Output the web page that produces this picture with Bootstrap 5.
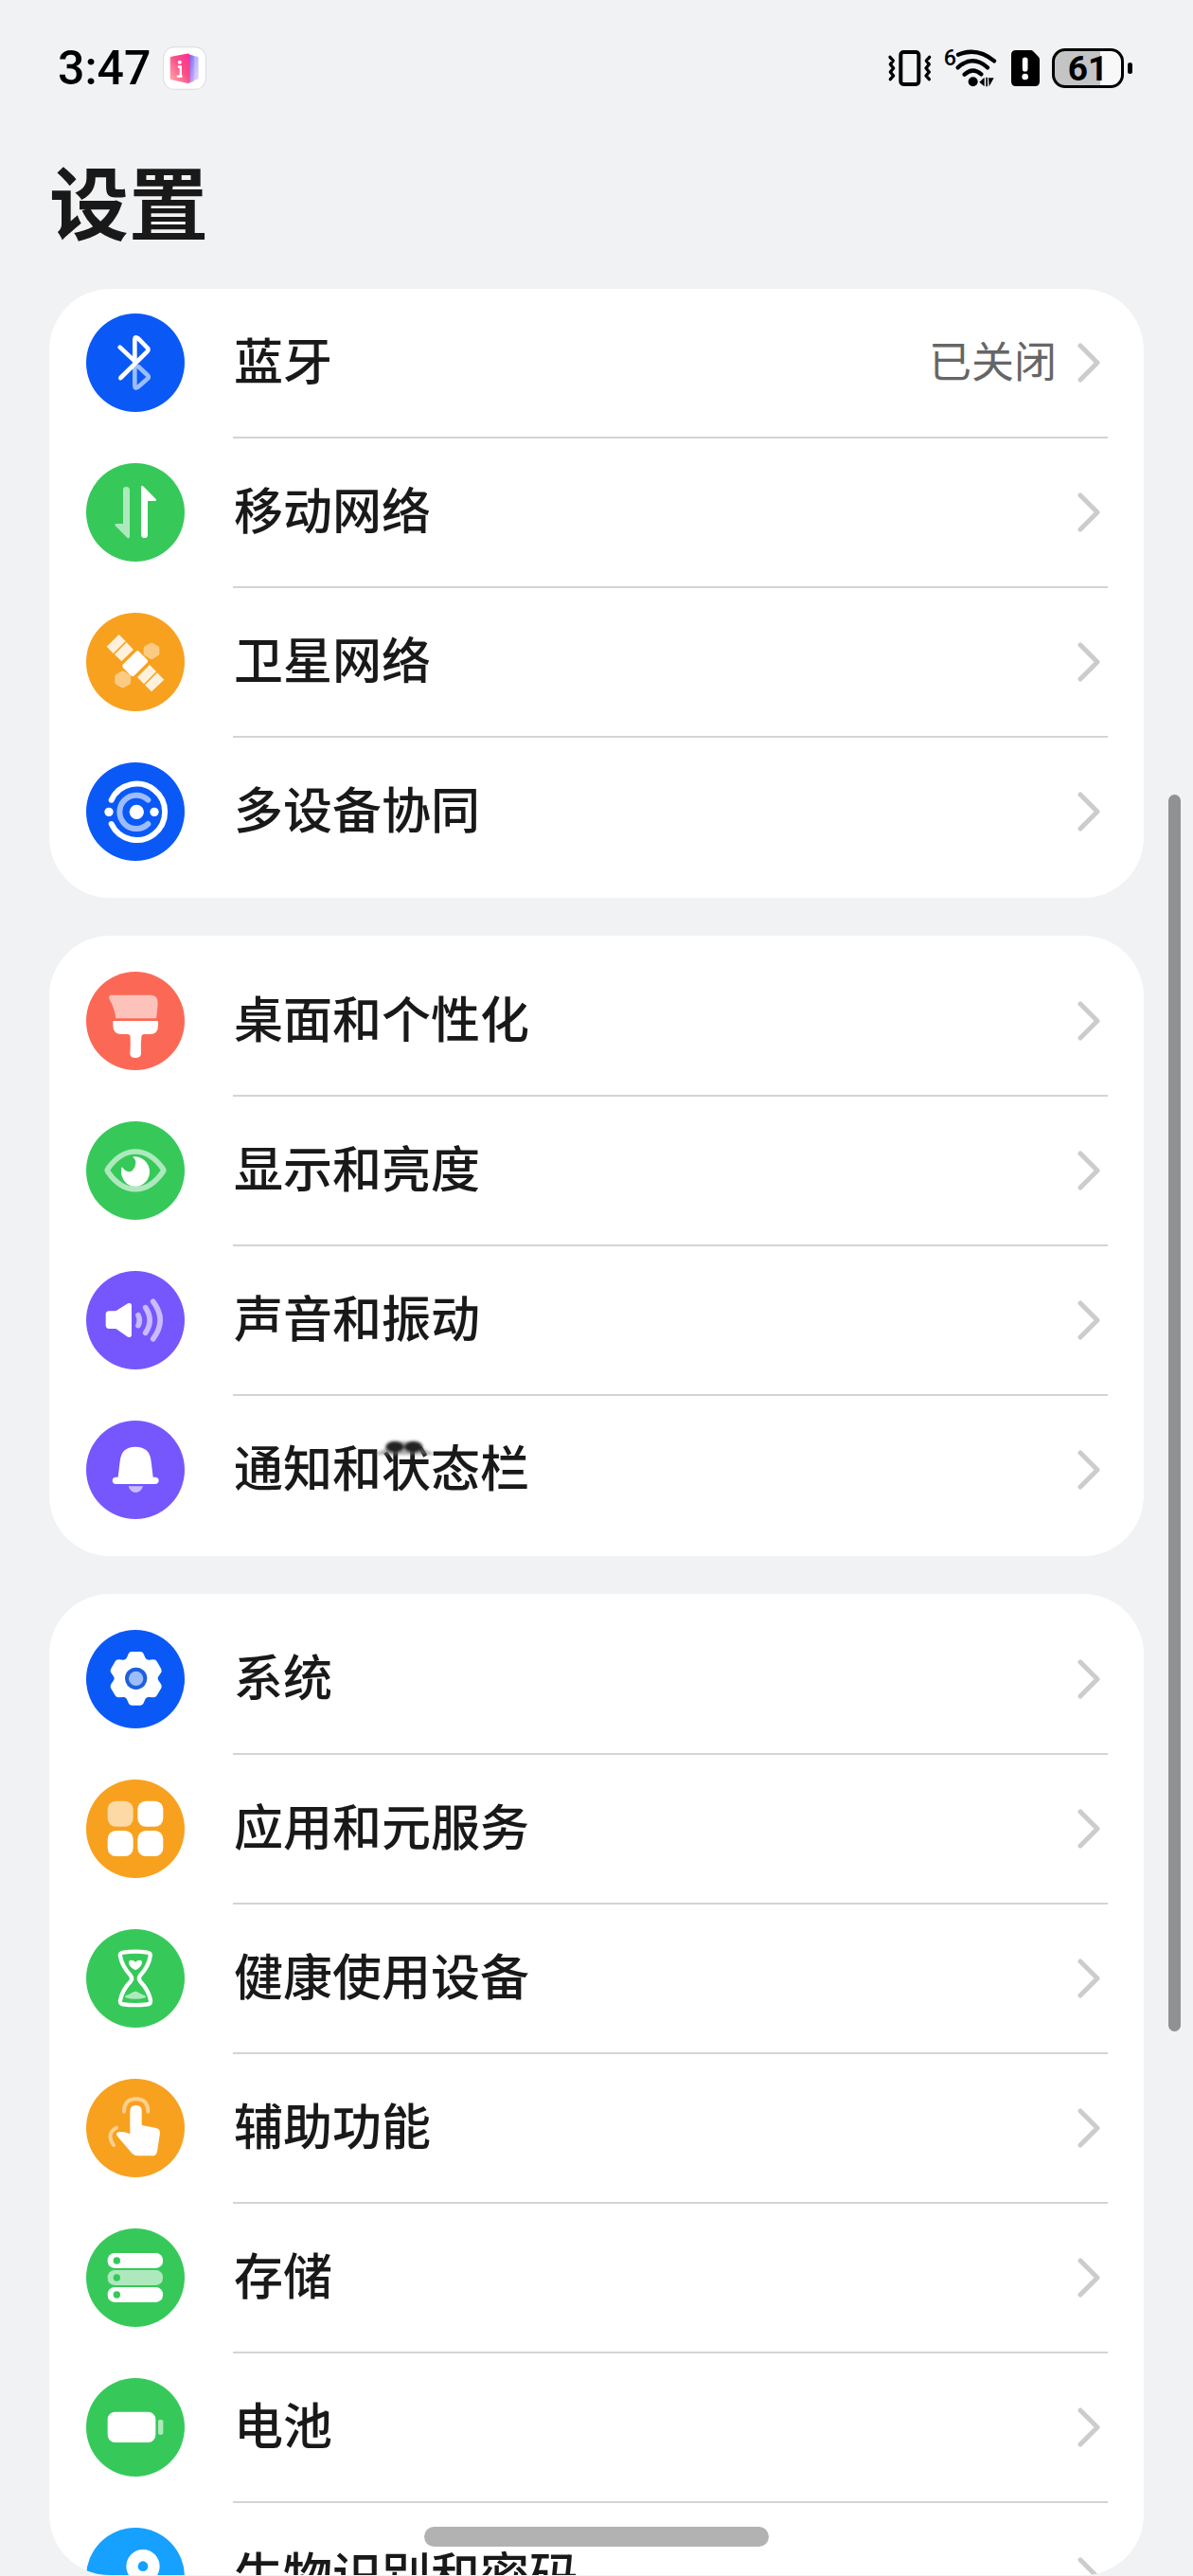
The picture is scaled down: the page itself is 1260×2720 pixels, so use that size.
<!DOCTYPE html>
<html lang="zh-CN">
<head>
<meta charset="utf-8">
<meta name="viewport" content="width=device-width, initial-scale=1">
<title>设置</title>
<link href="https://cdn.jsdelivr.net/npm/bootstrap@5.3.0/dist/css/bootstrap.min.css" rel="stylesheet">
<style>
  :root {
    --page: #f1f2f4;
    --ink: #191919;
    --blue: #0a59f7;
    --green: #36c95a;
    --orange: #f8a11f;
    --red: #fb6956;
    --purple: #7657fd;
    --sky: #16a0ff;
  }
  body {
    background: var(--page);
    color: var(--ink);
    font-family: "Noto Sans CJK SC", "Noto Sans", sans-serif;
  }
  .status-bar { height: 144px; padding: 0 64px 0 61px; color: #000; font-family: Roboto, sans-serif; }
  .clock { font-size: 50px; line-height: 60px; font-weight: 500; }
  .app-badge { margin-left: 13px; }
  .status-icons { gap: 10px; }
  .status-icons svg { overflow: visible; }
  .page-title { font-size: 84px; line-height: 134px; font-weight: 700; padding: 0 52px; margin-bottom: 27px; }
  .battery-shell {
    width: 76px; height: 42px; border: 3px solid #000; border-radius: 14px;
    background: linear-gradient(to right, #c3c4c5 68%, #f8f8f9 68%);
    font-size: 37px; line-height: 37px; font-weight: 700;
  }
  .battery-nub { width: 5px; height: 12px; border-radius: 3px; background: #000; }
  .settings-scroll {
    margin: 0 52px 1px; border-radius: 64px; gap: 40px;
    overflow-y: auto; scrollbar-width: none; min-height: 0;
  }
  .settings-scroll::-webkit-scrollbar { display: none; }
  .settings-group { background: #fff; border-radius: 64px; padding: 12px 38px 11px 39px; flex: none; }
  .settings-group:first-child { padding-top: 0; }
  .settings-item { height: 158px; gap: 51px; color: inherit; }
  .settings-item > svg { width: 104px; height: 104px; flex: none; border-radius: 50%; margin-bottom: 2px; }
  .item-body { height: 158px; border-bottom: 2px solid #d4d4d4; padding: 0 8px 0 1px; }
  .settings-item:last-child .item-body { border-color: transparent; }
  .item-label { font-size: 52px; line-height: 76px; font-weight: 500; margin-bottom: 8px; }
  .item-value { font-size: 45px; line-height: 66px; color: #666; margin-right: 22px; margin-bottom: 6px; }
  .chevron { width: 24px; height: 42px; flex: none; fill: none; stroke: #ccc; stroke-width: 5; stroke-linecap: round; stroke-linejoin: round; }
  .smudge { left: 147px; top: 6px; width: 64px; height: 32px; }
  .scroll-thumb { right: 13px; top: 839px; width: 13px; height: 48%; border-radius: 7px; background: #909193; }
  .home-pill { bottom: 31px; width: 364px; height: 21px; border-radius: 11px; background: #b2b2b2; }
</style>
</head>
<body class="vh-100 d-flex flex-column overflow-hidden position-relative">

<header>
  <div class="status-bar d-flex align-items-center justify-content-between">
    <div class="d-flex align-items-center">
      <span class="clock">3:47</span>
      <svg class="app-badge" width="46" height="46" viewBox="397 57 137 137" aria-hidden="true">
        <defs>
          <linearGradient id="bookFront" x1="1" y1="0" x2="0" y2="1"><stop offset="0" stop-color="#ff2d92"/><stop offset=".45" stop-color="#fb4c88"/><stop offset="1" stop-color="#fdb3ac"/></linearGradient>
          <linearGradient id="bookBack" x1="0" y1="0" x2="1" y2="1"><stop offset="0" stop-color="#5a62f8"/><stop offset="1" stop-color="#d9b4fb"/></linearGradient>
        </defs>
        <rect x="399" y="59" width="133" height="133" rx="34" fill="#fff" stroke="#d9dadc" stroke-width="3"/>
        <path d="M480 84l26 5q3 1 3 5v62q0 4-4 5l-25 6z" fill="url(#bookBack)" opacity=".6"/>
        <path d="M478 82l14 4q4 1 4 5v72q0 4-4 5l-14 4z" fill="url(#bookBack)"/>
        <path d="M424 89l52-10q6 0 6 5v84q0 6-6 5l-52-11q-4-1-4-5V94q0-4 4-5z" fill="url(#bookFront)"/>
        <circle cx="450" cy="107" r="6" fill="#fff"/>
        <path d="M444 121h9v29M441 151h17" fill="none" stroke="#fff" stroke-width="7"/>
      </svg>
    </div>
    <div class="status-icons d-flex align-items-center">
      <svg width="48" height="44" viewBox="80 60 144 132" fill="none" stroke="#000" stroke-linecap="round" stroke-linejoin="round" aria-label="振动">
        <rect x="123" y="75" width="57" height="102" rx="9" stroke-width="12"/>
        <path d="M89 91l10 11-9 12 10 12-10 12 10 12-10 11M214 91l-10 11 9 12-10 12 10 12-10 12 10 11" stroke-width="10"/>
      </svg>
      <svg width="60" height="44" viewBox="254 60 180 132" aria-label="WLAN 6">
        <text x="259" y="118" font-family="Roboto, sans-serif" font-size="70" font-weight="500">6</text>
        <g fill="none" stroke="#000" stroke-width="13" stroke-linecap="round">
          <path d="M305 83Q365 58 419 103"/>
          <path d="M304 124Q351 82 398 124"/>
          <path d="M325 146Q351 121 378 145"/>
        </g>
        <circle cx="352" cy="169" r="15"/>
        <path d="M388 155v29l-16-14zM393 155h5v29h-5zM401 157h17l-15 27z"/>
      </svg>
      <svg width="36" height="44" viewBox="456 60 108 132" aria-label="SIM 卡异常">
        <path d="M480 69h47q4 0 8 4l16 16q4 4 4 9v70q0 15-15 15h-60q-15 0-15-15V84q0-15 15-15z"/>
        <path d="M509 100v28" stroke="#fff" stroke-width="17" stroke-linecap="round"/>
        <circle cx="509" cy="153" r="10" fill="#fff"/>
      </svg>
      <div class="d-flex align-items-center gap-1">
        <div class="battery-shell text-center">61</div>
        <div class="battery-nub"></div>
      </div>
    </div>
  </div>
  <h1 class="page-title">设置</h1>
</header>

<main class="settings-scroll flex-grow-1 d-flex flex-column">

  <nav class="settings-group">
    <a href="#" class="settings-item d-flex align-items-center text-decoration-none">
      <svg viewBox="153 123 312 312" style="background:var(--blue)" fill="none" stroke="#fff" stroke-width="14" stroke-linecap="round" stroke-linejoin="round">
        <path d="M307 280v71q0 12 10 5l30-26q7-6 0-12l-28-26" opacity=".6"/>
        <path d="M260 230l47 44M262 327l84-83q7-7 0-13l-28-29q-11-8-11 4v66"/>
      </svg>
      <div class="item-body flex-grow-1 d-flex align-items-center"><span class="item-label me-auto">蓝牙</span><span class="item-value">已关闭</span><svg class="chevron" viewBox="0 0 24 42"><path d="M3 3l18 18L3 39"/></svg></div>
    </a>
    <a href="#" class="settings-item d-flex align-items-center text-decoration-none">
      <svg viewBox="153 597 312 312" style="background:var(--green)" fill="#fff">
        <path d="M270 682q0-10 10-10t11 10v149q-2 7-8 2l-38-38q-3-6 4-6h21z" opacity=".6"/>
        <path d="M327 673q2-7 8-2l39 40q3 6-4 6h-22v107q0 10-10 10t-11-10z"/>
      </svg>
      <div class="item-body flex-grow-1 d-flex align-items-center"><span class="item-label me-auto">移动网络</span><svg class="chevron" viewBox="0 0 24 42"><path d="M3 3l18 18L3 39"/></svg></div>
    </a>
    <a href="#" class="settings-item d-flex align-items-center text-decoration-none">
      <svg viewBox="33 81 312 312" style="background:var(--orange)" fill="#fff">
        <g opacity=".45">
          <path d="M236 177q4-2 8 0l17 10q4 2 4 6v18q0 4-4 6l-17 10q-4 2-8 0l-17-10q-4-2-4-6v-18q0-4 4-6z"/>
          <path d="M145 266q4-2 8 0l17 10q4 2 4 6v20q0 4-4 6l-17 10q-4 2-8 0l-17-10q-4-2-4-6v-20q0-4 4-6z"/>
        </g>
        <rect x="-36" y="-25" width="72" height="50" rx="8" transform="translate(188 242) rotate(-45)"/>
        <g opacity=".85">
          <path d="M137 150l21 21-39 39-21-22zM161 175l22 23-38 37-22-22z"/>
          <path d="M234 246l21 21-39 40-21-22zM258 271l22 22-40 38-21-21z"/>
        </g>
      </svg>
      <div class="item-body flex-grow-1 d-flex align-items-center"><span class="item-label me-auto">卫星网络</span><svg class="chevron" viewBox="0 0 24 42"><path d="M3 3l18 18L3 39"/></svg></div>
    </a>
    <a href="#" class="settings-item d-flex align-items-center text-decoration-none">
      <svg viewBox="33 555 312 312" style="background:var(--blue)" fill="none" stroke="#fff" stroke-width="18" stroke-linecap="round">
        <path d="M113 674A89 89 0 1 1 113 750"/>
        <path d="M229 674A53 53 0 1 0 229 750" opacity=".6"/>
        <g fill="#fff" stroke="none"><circle cx="193" cy="712" r="23"/><circle cx="105" cy="712" r="14"/><circle cx="249" cy="712" r="14"/></g>
      </svg>
      <div class="item-body flex-grow-1 d-flex align-items-center"><span class="item-label me-auto">多设备协同</span><svg class="chevron" viewBox="0 0 24 42"><path d="M3 3l18 18L3 39"/></svg></div>
    </a>
  </nav>

  <nav class="settings-group">
    <a href="#" class="settings-item d-flex align-items-center text-decoration-none">
      <svg viewBox="33 138 312 312" style="background:var(--red)" fill="#fff">
        <path d="M113 212h124q23 0 23 24-1 26-5 50H127q-4-34-21-62-3-12 7-12z" opacity=".6"/>
        <path d="M118 294h143v14q0 28-26 28h-17q-11 0-10 12l-1 10q-1 8 0 40-2 13-18 13t-17-13q2-32 1-40v-10q1-12-10-12h-17q-28 0-28-28z"/>
      </svg>
      <div class="item-body flex-grow-1 d-flex align-items-center"><span class="item-label me-auto">桌面和个性化</span><svg class="chevron" viewBox="0 0 24 42"><path d="M3 3l18 18L3 39"/></svg></div>
    </a>
    <a href="#" class="settings-item d-flex align-items-center text-decoration-none">
      <svg viewBox="33 612 312 312" style="background:var(--green)" fill="#fff">
        <path d="M102 762q38-54 87-54t87 54q4 5 0 10-38 55-87 55t-87-55q-4-5 0-10z" fill="none" stroke="#fff" stroke-width="17" opacity=".6"/>
        <path d="M181 724Q200 744 180 767Q164 780 146 756Q141 776 147 788A45 47 0 0 0 234 775A47 49 0 0 0 181 724z"/>
      </svg>
      <div class="item-body flex-grow-1 d-flex align-items-center"><span class="item-label me-auto">显示和亮度</span><svg class="chevron" viewBox="0 0 24 42"><path d="M3 3l18 18L3 39"/></svg></div>
    </a>
    <a href="#" class="settings-item d-flex align-items-center text-decoration-none">
      <svg viewBox="33 66 312 312" style="background:var(--purple)" fill="#fff">
        <path d="M106 193h18q5 0 9-4l32-20q12-4 12 8v90q0 12-12 8l-32-22q-4-4-9-4h-18q-11 0-11-11v-34q0-11 11-11z"/>
        <g fill="none" stroke="#fff" stroke-width="17" stroke-linecap="round" opacity=".6">
          <path d="M198 206q8 16 0 33"/>
          <path d="M221 182q27 40 0 80"/>
          <path d="M245 163q45 59 0 118"/>
        </g>
      </svg>
      <div class="item-body flex-grow-1 d-flex align-items-center"><span class="item-label me-auto">声音和振动</span><svg class="chevron" viewBox="0 0 24 42"><path d="M3 3l18 18L3 39"/></svg></div>
    </a>
    <a href="#" class="settings-item d-flex align-items-center text-decoration-none">
      <svg viewBox="33 540 312 312" style="background:var(--purple)" fill="#fff">
        <path d="M189 623q46 0 50 46l6 50h6q12 0 12 11t-12 11H128q-12 0-12-11t12-11h6l6-50q4-46 49-46z"/>
        <path d="M167 748h46q-6 20-23 20t-23-20z" opacity=".6"/>
      </svg>
      <div class="item-body flex-grow-1 d-flex align-items-center">
        <span class="item-label me-auto position-relative">通知和状态栏
          <svg class="smudge position-absolute" viewBox="945 590 192 96" aria-hidden="true">
            <defs><filter id="soft" x="-30%" y="-60%" width="160%" height="220%"><feGaussianBlur stdDeviation="5"/></filter></defs>
            <g filter="url(#soft)">
              <path d="M955 645q32-10 48-36h84q14 26 48 36v5H955z" fill="#777" opacity=".6"/>
              <ellipse cx="1014" cy="625" rx="29" ry="18" fill="#222"/>
              <ellipse cx="1073" cy="625" rx="29" ry="18" fill="#222"/>
            </g>
          </svg>
        </span>
        <svg class="chevron" viewBox="0 0 24 42"><path d="M3 3l18 18L3 39"/></svg>
      </div>
    </a>
  </nav>

  <nav class="settings-group">
    <a href="#" class="settings-item d-flex align-items-center text-decoration-none">
      <svg viewBox="-156 -156 312 312" style="background:var(--blue)" fill="#fff">
        <g transform="translate(2 -2)">
          <path d="M-14-85H14Q21-85 24-78L29-66Q33-58 41-59L54-60Q62-61 66-54L79-32Q83-25 79-18L71-6Q67 0 71 6L79 18Q83 25 79 32L66 54Q62 61 54 60L41 59Q33 58 29 66L24 78Q21 85 14 85H-14Q-21 85-24 78L-29 66Q-33 58-41 59L-54 60Q-62 61-66 54L-79 32Q-83 25-79 18L-71 6Q-67 0-71-6L-79-18Q-83-25-79-32L-66-54Q-62-61-54-60L-41-59Q-33-58-29-66L-24-78Q-21-85-14-85z"/>
          <circle r="35" fill="#1d5fdc"/>
          <circle r="23" fill="#9dbcfa"/>
        </g>
      </svg>
      <div class="item-body flex-grow-1 d-flex align-items-center"><span class="item-label me-auto">系统</span><svg class="chevron" viewBox="0 0 24 42"><path d="M3 3l18 18L3 39"/></svg></div>
    </a>
    <a href="#" class="settings-item d-flex align-items-center text-decoration-none">
      <svg viewBox="-156 -156 312 312" style="background:var(--orange)" fill="#fff">
        <rect x="-88" y="-88" width="81" height="81" rx="26" opacity=".6"/>
        <rect x="7" y="-88" width="81" height="81" rx="26"/>
        <rect x="-88" y="6" width="81" height="81" rx="26"/>
        <rect x="7" y="6" width="81" height="81" rx="26"/>
      </svg>
      <div class="item-body flex-grow-1 d-flex align-items-center"><span class="item-label me-auto">应用和元服务</span><svg class="chevron" viewBox="0 0 24 42"><path d="M3 3l18 18L3 39"/></svg></div>
    </a>
    <a href="#" class="settings-item d-flex align-items-center text-decoration-none">
      <svg viewBox="33 51 312 312" style="background:var(--green)" fill="#fff">
        <path d="M150 125q39-6 77 0 11 1 9 12-5 32-32 61-7 9 0 18 27 29 33 60 2 12-10 13-38 5-77 0-11-1-9-13 6-31 33-60 7-9 0-18-27-29-33-61-2-11 9-12z" fill="none" stroke="#fff" stroke-width="13"/>
        <path d="M189 181q-20-11-21-23-1-9 8-9 8 0 13 6 6-6 13-6 9 0 8 9-2 13-21 23z"/>
        <path d="M158 262q10-4 22-11 9-5 18 0 12 7 22 11 5 4 0 6-31 9-62 0-5-2 0-6z" opacity=".6"/>
      </svg>
      <div class="item-body flex-grow-1 d-flex align-items-center"><span class="item-label me-auto">健康使用设备</span><svg class="chevron" viewBox="0 0 24 42"><path d="M3 3l18 18L3 39"/></svg></div>
    </a>
    <a href="#" class="settings-item d-flex align-items-center text-decoration-none">
      <svg viewBox="33 525 312 312" style="background:var(--orange)" fill="#fff">
        <path d="M172 628q0-19 19-19t18 19v44l46 9q12 3 12 16l-9 58q-3 14-15 14h-47q-9 0-17-7l-47-55q-8-10 3-13 17-3 37 6z"/>
        <path d="M153 629q1-40 38-40t38 40M129 680q-34 18-9 55" fill="none" stroke="#fff" stroke-width="12" stroke-linecap="round" opacity=".5"/>
      </svg>
      <div class="item-body flex-grow-1 d-flex align-items-center"><span class="item-label me-auto">辅助功能</span><svg class="chevron" viewBox="0 0 24 42"><path d="M3 3l18 18L3 39"/></svg></div>
    </a>
    <a href="#" class="settings-item d-flex align-items-center text-decoration-none">
      <svg viewBox="33 69 312 312" style="background:var(--green)" fill="#fff">
        <rect x="101" y="147" width="175" height="48" rx="22"/>
        <rect x="101" y="201" width="175" height="48" rx="22" opacity=".6"/>
        <rect x="101" y="255" width="175" height="48" rx="22"/>
        <g fill="#36c95a"><circle cx="130" cy="171" r="11"/><circle cx="130" cy="225" r="11"/><circle cx="130" cy="279" r="11"/></g>
      </svg>
      <div class="item-body flex-grow-1 d-flex align-items-center"><span class="item-label me-auto">存储</span><svg class="chevron" viewBox="0 0 24 42"><path d="M3 3l18 18L3 39"/></svg></div>
    </a>
    <a href="#" class="settings-item d-flex align-items-center text-decoration-none">
      <svg viewBox="33 543 312 312" style="background:var(--green)" fill="#fff">
        <rect x="101" y="650" width="152" height="97" rx="24"/>
        <rect x="261" y="675" width="16" height="47" rx="5" opacity=".6"/>
      </svg>
      <div class="item-body flex-grow-1 d-flex align-items-center"><span class="item-label me-auto">电池</span><svg class="chevron" viewBox="0 0 24 42"><path d="M3 3l18 18L3 39"/></svg></div>
    </a>
    <a href="#" class="settings-item d-flex align-items-center text-decoration-none">
      <svg viewBox="33 1017 312 312" style="background:var(--sky)" fill="#fff">
        <circle cx="213" cy="1139" r="53"/>
        <path d="M176 1165l28 28-66 66h-30v-28z"/>
        <circle cx="213" cy="1139" r="16" fill="#16a0ff"/>
      </svg>
      <div class="item-body flex-grow-1 d-flex align-items-center"><span class="item-label me-auto">生物识别和密码</span><svg class="chevron" viewBox="0 0 24 42"><path d="M3 3l18 18L3 39"/></svg></div>
    </a>
  </nav>
</main>

<div class="scroll-thumb position-absolute"></div>
<div class="home-pill position-absolute start-50 translate-middle-x"></div>

<script src="https://cdn.jsdelivr.net/npm/bootstrap@5.3.0/dist/js/bootstrap.bundle.min.js"></script>
</body>
</html>
